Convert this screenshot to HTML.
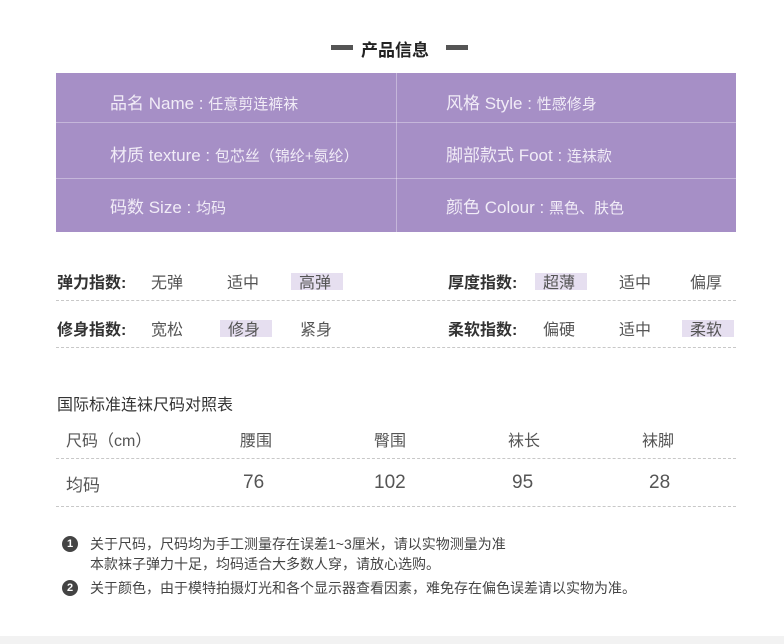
<!DOCTYPE html>
<html><head><meta charset="utf-8"><style>
*{margin:0;padding:0;box-sizing:border-box}
body{width:784px;height:644px;background:#fff;position:relative;overflow:hidden;font-family:"Liberation Sans","Noto Sans CJK SC",sans-serif;color:#444}
.a{position:absolute;white-space:nowrap}
.box{position:absolute;left:56px;top:73px;width:680px;height:159px;background:#a68fc6}
.hl{position:absolute;background:#fff;opacity:.35}
.pt{position:absolute;color:#f1ecf7;font-size:17px;white-space:nowrap}
.pt small{font-size:15px}
.dash{position:absolute;left:56px;width:680px;border-top:1px dashed #c8c8c8;height:0}
.lbl{font-size:16px;font-weight:bold;color:#333}
.v{font-size:16px;color:#555}
.mk{position:absolute;background:#e6dff0;width:52px;height:17px}
</style></head><body>
<div class="a" style="left:331px;top:45px;width:22px;height:5px;background:#555"></div>
<div class="a" style="left:361px;top:36px;font-size:17px;font-weight:bold;color:#222">产品信息</div>
<div class="a" style="left:446px;top:45px;width:22px;height:5px;background:#555"></div>
<div class="box">
 <div class="hl" style="left:0;top:49px;width:680px;height:1px"></div>
 <div class="hl" style="left:0;top:105px;width:680px;height:1px"></div>
 <div class="hl" style="left:340px;top:0;width:1px;height:159px"></div>
</div>
<div class="pt" style="left:110px;top:89px">品名 Name : <small>任意剪连裤袜</small></div>
<div class="pt" style="left:446px;top:89px">风格 Style : <small>性感修身</small></div>
<div class="pt" style="left:110px;top:141px">材质 texture : <small>包芯丝（锦纶+氨纶）</small></div>
<div class="pt" style="left:446px;top:141px">脚部款式 Foot : <small>连袜款</small></div>
<div class="pt" style="left:110px;top:193px">码数 Size : <small>均码</small></div>
<div class="pt" style="left:446px;top:193px">颜色 Colour : <small>黑色、肤色</small></div>

<div class="mk" style="left:291px;top:273px"></div>
<div class="mk" style="left:535px;top:273px"></div>
<div class="mk" style="left:220px;top:320px"></div>
<div class="mk" style="left:682px;top:320px"></div>

<div class="a lbl" style="left:57px;top:269px">弹力指数:</div>
<div class="a v" style="left:151px;top:269px">无弹</div>
<div class="a v" style="left:227px;top:269px">适中</div>
<div class="a v" style="left:299px;top:269px">高弹</div>
<div class="a lbl" style="left:448px;top:269px">厚度指数:</div>
<div class="a v" style="left:543px;top:269px">超薄</div>
<div class="a v" style="left:619px;top:269px">适中</div>
<div class="a v" style="left:690px;top:269px">偏厚</div>
<div class="dash" style="top:300px"></div>

<div class="a lbl" style="left:57px;top:316px">修身指数:</div>
<div class="a v" style="left:151px;top:316px">宽松</div>
<div class="a v" style="left:228px;top:316px">修身</div>
<div class="a v" style="left:300px;top:316px">紧身</div>
<div class="a lbl" style="left:448px;top:316px">柔软指数:</div>
<div class="a v" style="left:543px;top:316px">偏硬</div>
<div class="a v" style="left:619px;top:316px">适中</div>
<div class="a v" style="left:690px;top:316px">柔软</div>
<div class="dash" style="top:347px"></div>

<div class="a" style="left:57px;top:391px;font-size:16px;color:#333">国际标准连袜尺码对照表</div>
<div class="a v" style="left:66px;top:427px">尺码（cm）</div>
<div class="a v" style="left:240px;top:427px">腰围</div>
<div class="a v" style="left:374px;top:427px">臀围</div>
<div class="a v" style="left:508px;top:427px">袜长</div>
<div class="a v" style="left:642px;top:427px">袜脚</div>
<div class="dash" style="top:458px"></div>
<div class="a v" style="left:66px;top:471px;font-size:17px">均码</div>
<div class="a v" style="left:243px;top:472px;font-size:19px">76</div>
<div class="a v" style="left:374px;top:472px;font-size:19px">102</div>
<div class="a v" style="left:512px;top:472px;font-size:19px">95</div>
<div class="a v" style="left:649px;top:472px;font-size:19px">28</div>
<div class="dash" style="top:506px"></div>

<div class="a" style="left:62px;top:536px;width:16px;height:16px;border-radius:50%;background:#444;color:#fff;font-size:11px;font-weight:bold;text-align:center;line-height:16px">1</div>
<div class="a" style="left:90px;top:534px;font-size:14px;color:#444">关于尺码，尺码均为手工测量存在误差1~3厘米，请以实物测量为准</div>
<div class="a" style="left:90px;top:554px;font-size:14px;color:#444">本款袜子弹力十足，均码适合大多数人穿，请放心选购。</div>
<div class="a" style="left:62px;top:580px;width:16px;height:16px;border-radius:50%;background:#444;color:#fff;font-size:11px;font-weight:bold;text-align:center;line-height:16px">2</div>
<div class="a" style="left:90px;top:578px;font-size:14px;color:#444">关于颜色，由于模特拍摄灯光和各个显示器查看因素，难免存在偏色误差请以实物为准。</div>
<div class="a" style="left:0;top:636px;width:784px;height:8px;background:#f2f2f2"></div>
</body></html>
